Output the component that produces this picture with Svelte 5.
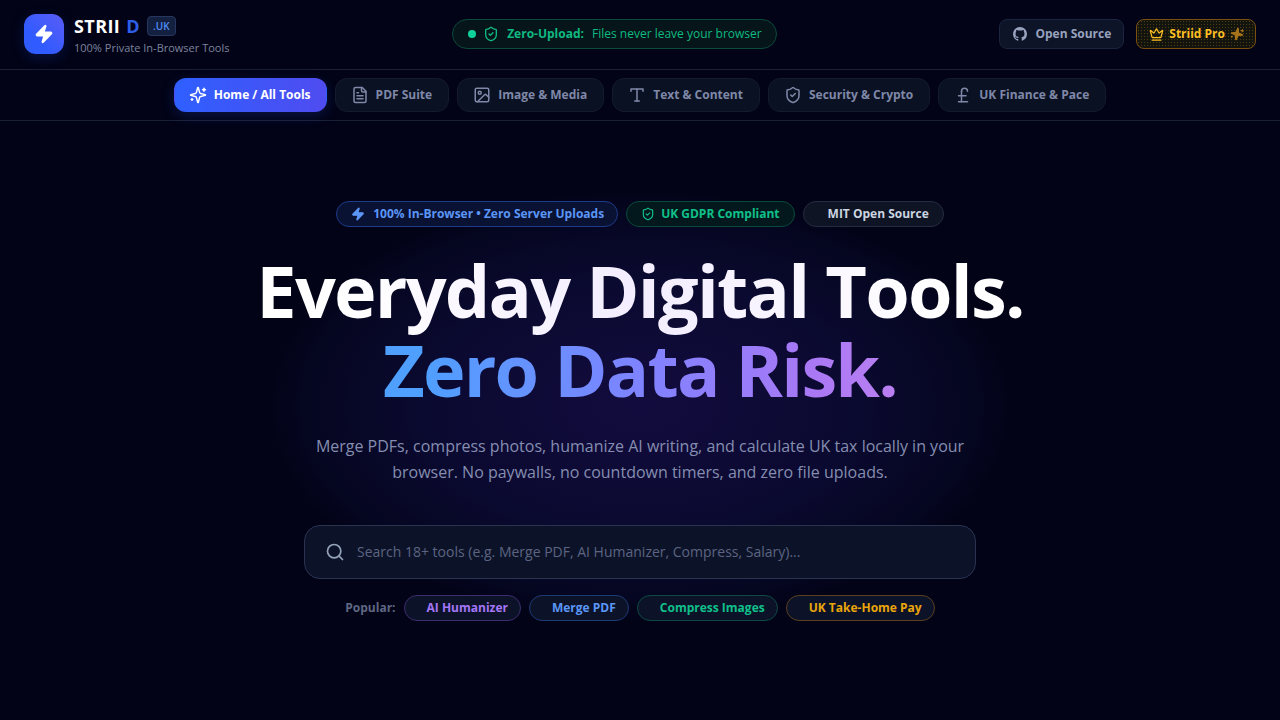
<script lang="ts">
	const icons: Record<string, string[]> = {
		zap: ['M4 14a1 1 0 0 1-.78-1.63l9.9-10.2a.5.5 0 0 1 .86.46l-1.92 6.02A1 1 0 0 0 13 10h7a1 1 0 0 1 .78 1.63l-9.9 10.2a.5.5 0 0 1-.86-.46l1.92-6.02A1 1 0 0 0 11 14z'],
		shield: [
			'M20 13c0 5-3.5 7.5-7.66 8.95a1 1 0 0 1-.67-.01C7.5 20.5 4 18 4 13V6a1 1 0 0 1 1-1c2 0 4.5-1.2 6.24-2.72a1.17 1.17 0 0 1 1.52 0C14.51 3.81 17 5 19 5a1 1 0 0 1 1 1z',
			'm9 12 2 2 4-4'
		],
		crown: [
			'M11.562 3.266a.5.5 0 0 1 .876 0L15.39 8.87a1 1 0 0 0 1.516.294L21.183 5.5a.5.5 0 0 1 .798.519l-2.834 10.246a1 1 0 0 1-.956.734H5.81a1 1 0 0 1-.957-.734L2.02 6.02a.5.5 0 0 1 .798-.519l4.276 3.664a1 1 0 0 0 1.516-.294z',
			'M5 21h14'
		],
		sparkles: [
			'M9.937 15.5A2 2 0 0 0 8.5 14.063l-6.135-1.582a.5.5 0 0 1 0-.962L8.5 9.936A2 2 0 0 0 9.937 8.5l1.582-6.135a.5.5 0 0 1 .963 0L14.063 8.5A2 2 0 0 0 15.5 9.937l6.135 1.581a.5.5 0 0 1 0 .964L15.5 14.063a2 2 0 0 0-1.437 1.437l-1.582 6.135a.5.5 0 0 1-.963 0z',
			'M20 3v4',
			'M22 5h-4',
			'M4 17v2',
			'M5 18H3'
		],
		file: [
			'M15 2H6a2 2 0 0 0-2 2v16a2 2 0 0 0 2 2h12a2 2 0 0 0 2-2V7Z',
			'M14 2v4a2 2 0 0 0 2 2h4',
			'M10 9H8',
			'M16 13H8',
			'M16 17H8'
		],
		image: [
			'M5 3h14a2 2 0 0 1 2 2v14a2 2 0 0 1-2 2H5a2 2 0 0 1-2-2V5a2 2 0 0 1 2-2z',
			'M9 7a2 2 0 1 0 0 4 2 2 0 0 0 0-4z',
			'm21 15-3.086-3.086a2 2 0 0 0-2.828 0L6 21'
		],
		type: ['M4 7V4h16v3', 'M9 20h6', 'M12 4v16'],
		pound: ['M18 7c0-5.333-8-5.333-8 0', 'M10 7v14', 'M6 21h12', 'M6 13h10'],
		search: ['M11 3a8 8 0 1 0 0 16 8 8 0 0 0 0-16z', 'm21 21-4.3-4.3']
	};

	const navItems = [
		{ label: 'Home / All Tools', icon: 'sparkles', active: true },
		{ label: 'PDF Suite', icon: 'file' },
		{ label: 'Image & Media', icon: 'image' },
		{ label: 'Text & Content', icon: 'type' },
		{ label: 'Security & Crypto', icon: 'shield' },
		{ label: 'UK Finance & Pace', icon: 'pound' }
	];

	const popular = [
		{ label: 'AI Humanizer', tone: 'purple' },
		{ label: 'Merge PDF', tone: 'blue' },
		{ label: 'Compress Images', tone: 'green' },
		{ label: 'UK Take-Home Pay', tone: 'amber' }
	];
</script>

{#snippet icon(name: string, size: number, filled = false)}
	<svg
		class="icon"
		width={size}
		height={size}
		viewBox="0 0 24 24"
		fill={filled ? 'currentColor' : 'none'}
		stroke="currentColor"
		stroke-width="2"
		stroke-linecap="round"
		stroke-linejoin="round"
	>
		{#each icons[name] as d}
			<path {d} />
		{/each}
	</svg>
{/snippet}

<div class="page">
	<header class="topbar">
		<div class="brand">
			<div class="logo">{@render icon('zap', 20, true)}</div>
			<div class="brand-text">
				<div class="brand-row">
					<span class="wordmark">STRII <em>D</em></span>
					<span class="tld">.UK</span>
				</div>
				<div class="tagline">100% Private In-Browser Tools</div>
			</div>
		</div>

		<div class="status">
			<span class="dot"></span>
			{@render icon('shield', 16)}
			<strong>Zero-Upload:</strong>
			<span>Files never leave your browser</span>
		</div>

		<div class="actions">
			<button type="button" class="btn-source">
				<svg class="icon" width="14" height="14" viewBox="0 0 16 16" fill="currentColor">
					<path d="M8 0C3.58 0 0 3.58 0 8c0 3.54 2.29 6.53 5.47 7.59.4.07.55-.17.55-.38 0-.19-.01-.82-.01-1.49-2.01.37-2.53-.49-2.69-.94-.09-.23-.48-.94-.82-1.13-.28-.15-.68-.52-.01-.53.63-.01 1.08.58 1.23.82.72 1.21 1.87.87 2.33.66.07-.52.28-.87.51-1.07-1.78-.2-3.64-.89-3.64-3.95 0-.87.31-1.59.82-2.15-.08-.2-.36-1.02.08-2.12 0 0 .67-.21 2.2.82.64-.18 1.32-.27 2-.27.68 0 1.36.09 2 .27 1.53-1.04 2.2-.82 2.2-.82.44 1.1.16 1.92.08 2.12.51.56.82 1.27.82 2.15 0 3.07-1.87 3.75-3.65 3.95.29.25.54.73.54 1.48 0 1.07-.01 1.93-.01 2.2 0 .21.15.46.55.38A8.013 8.013 0 0016 8c0-4.42-3.58-8-8-8z" />
				</svg>
				Open Source
			</button>
			<button type="button" class="btn-pro">
				{@render icon('crown', 15)} Striid Pro
				<span class="pro-spark">{@render icon('sparkles', 14, true)}</span>
			</button>
		</div>
	</header>

	<nav class="tabs">
		{#each navItems as item}
			<button type="button" class="tab" class:active={item.active}>
				{@render icon(item.icon, 18)}
				{item.label}
			</button>
		{/each}
	</nav>

	<main class="hero">
		<div class="glow"></div>
		<div class="badges">
			<span class="badge blue">{@render icon('zap', 14, true)} 100% In-Browser • Zero Server Uploads</span>
			<span class="badge green">{@render icon('shield', 14)} UK GDPR Compliant</span>
			<span class="badge grey">MIT Open Source</span>
		</div>

		<h1>
			<span class="line-one">Everyday Digital Tools.</span>
			<span class="line-two">Zero Data Risk.</span>
		</h1>

		<p class="lead">
			Merge PDFs, compress photos, humanize AI writing, and calculate UK tax locally in your browser. No
			paywalls, no countdown timers, and zero file uploads.
		</p>

		<div class="search">
			{@render icon('search', 20)}
			<input type="text" placeholder="Search 18+ tools (e.g. Merge PDF, AI Humanizer, Compress, Salary)..." />
		</div>

		<div class="popular">
			<span class="popular-label">Popular:</span>
			{#each popular as chip}
				<button type="button" class="chip {chip.tone}">{chip.label}</button>
			{/each}
		</div>
	</main>
</div>

<style>
	:global(body) {
		background: #020316;
	}

	.page {
		height: 720px;
		overflow: hidden;
		background: #020316;
		font-family: 'Open Sans', 'Liberation Sans', sans-serif;
		color: #f8fafc;
	}

	button {
		font-family: inherit;
	}

	.icon {
		flex: none;
		display: block;
	}

	.topbar {
		height: 68px;
		padding: 0 24px 1px;
		border-bottom: 1px solid #1a2036;
		display: flex;
		align-items: center;
		justify-content: space-between;
	}

	.brand {
		display: flex;
		align-items: center;
		gap: 10px;
	}

	.logo {
		width: 40px;
		height: 40px;
		border-radius: 12px;
		background: linear-gradient(45deg, #2f5bff 30%, #5b5cf6 100%);
		box-shadow: 0 4px 14px rgba(47, 91, 255, 0.18);
		color: #fff;
		display: flex;
		align-items: center;
		justify-content: center;
	}

	.brand-row {
		display: flex;
		align-items: center;
		gap: 7px;
		height: 26px;
		margin-top: 1px;
	}

	.wordmark {
		font-size: 18px;
		font-weight: 700;
		line-height: 24px;
		letter-spacing: 0.4px;
		color: #fff;
	}

	.wordmark em {
		font-style: normal;
		margin-left: 1px;
		color: #2f5fe8;
		letter-spacing: 0;
	}

	.tld {
		height: 20px;
		box-sizing: border-box;
		padding: 0 5.5px;
		border: 1px solid #27365f;
		border-radius: 4px;
		background: #14203f;
		color: #4f8ef7;
		font-size: 10px;
		font-weight: 600;
		line-height: 18px;
	}

	.tagline {
		margin-top: 1px;
		font-size: 11px;
		line-height: 16px;
		color: #7c849e;
	}

	.status {
		height: 30px;
		box-sizing: border-box;
		display: flex;
		align-items: center;
		gap: 8px;
		padding: 0 14px;
		border: 1px solid #0a4a3b;
		border-radius: 15px;
		background: #06151a;
		color: #10b981;
		font-size: 12px;
		line-height: 16px;
	}

	.status strong {
		font-weight: 700;
	}

	.dot {
		width: 8px;
		height: 8px;
		margin-left: 0.5px;
		margin-right: -0.5px;
		border-radius: 50%;
		background: #10d39a;
	}

	.actions {
		display: flex;
		gap: 12px;
	}

	.btn-source,
	.btn-pro {
		height: 30px;
		box-sizing: border-box;
		display: flex;
		align-items: center;
		border-radius: 8px;
		font-size: 12px;
		font-weight: 700;
		line-height: 16px;
	}

	.btn-source {
		gap: 8px;
		padding: 0 12px 0 13px;
		background: #0d1427;
		border: 1px solid #1c2540;
		color: #98a2bd;
	}

	.btn-pro {
		gap: 5px;
		padding: 0 11px 0 12px;
		background: radial-gradient(circle, #4d3d12 0.6px, transparent 0.8px) 0 0 / 3px 3px, #14140f;
		border: 1px solid #7a4f10;
		color: #fbbf24;
	}

	.pro-spark {
		color: #a8741a;
		transform: rotate(10deg);
	}

	.tabs {
		height: 50px;
		border-bottom: 1px solid #1a2036;
		display: flex;
		align-items: center;
		justify-content: center;
		gap: 8px;
	}

	.tab {
		height: 34px;
		box-sizing: border-box;
		display: flex;
		align-items: center;
		gap: 7px;
		padding: 0 16px 0 15px;
		border-radius: 12px;
		border: 1px solid #141b2e;
		background: #0a1122;
		color: #7f88a8;
		font-size: 12px;
		font-weight: 700;
		line-height: 16px;
	}

	.tab.active {
		padding: 0 15px 0 14px;
		border-color: transparent;
		background: linear-gradient(90deg, #2f5fff, #4f4cf0);
		color: #fff;
		box-shadow: 0 4px 14px rgba(47, 91, 255, 0.2);
	}

	.hero {
		position: relative;
		display: flex;
		flex-direction: column;
		align-items: center;
		padding-top: 80px;
	}

	.glow {
		position: absolute;
		left: 270px;
		top: 70px;
		width: 740px;
		height: 430px;
		border-radius: 50%;
		background: radial-gradient(closest-side, rgba(72, 40, 190, 0.24), rgba(50, 40, 170, 0.17) 60%, rgba(40, 40, 150, 0.09) 88%, rgba(40, 40, 150, 0.03) 98%, transparent);
		pointer-events: none;
	}

	.badges {
		position: relative;
		display: flex;
		gap: 8px;
	}

	.badge {
		height: 26px;
		box-sizing: border-box;
		display: flex;
		align-items: center;
		gap: 8px;
		padding: 0 14px;
		border-radius: 13px;
		border: 1px solid;
		font-size: 12px;
		font-weight: 700;
		line-height: 16px;
	}

	.badge.blue {
		padding-right: 13px;
		color: #5b96f7;
		background: #0a1233;
		border-color: #1e3a8a;
	}

	.badge.green {
		gap: 6px;
		color: #10c08a;
		background: #03181c;
		border-color: #0a4a3b;
	}

	.badge.grey {
		color: #cbd5e1;
		background: #0f1424;
		border-color: #252b40;
		padding-left: 24px;
	}

	h1 {
		position: relative;
		margin: 24px 0 0;
		font-size: 72px;
		font-weight: 700;
		line-height: 79px;
		letter-spacing: -1.8px;
		text-align: center;
	}

	h1 span {
		display: block;
		padding-bottom: 7px;
		margin-bottom: -7px;
		background-clip: text;
		-webkit-background-clip: text;
		color: transparent;
	}

	.line-one {
		background-image: linear-gradient(90deg, #fff 10%, #f3edff 50%, #fff 90%);
	}

	.line-two {
		background-image: linear-gradient(90deg, #4f9fff 22%, #7f83ff 50%, #a878f5 72%, #bd80f0 85%);
	}

	.lead {
		position: relative;
		width: 672px;
		margin: 24px 0 0;
		font-size: 16px;
		line-height: 26px;
		text-align: center;
		color: #858eb0;
	}

	.search {
		position: relative;
		width: 672px;
		height: 54px;
		box-sizing: border-box;
		margin-top: 40px;
		display: flex;
		align-items: center;
		gap: 12px;
		padding: 0 20px;
		border: 1px solid #2a3350;
		border-radius: 16px;
		background: #0c1328;
		color: #94a3b8;
	}

	.search input {
		flex: 1;
		background: none;
		border: none;
		outline: none;
		padding: 0 0 2px;
		font-family: inherit;
		font-size: 14px;
		color: #f8fafc;
	}

	.search input::placeholder {
		color: #5c6482;
		opacity: 1;
	}

	.popular {
		position: relative;
		display: flex;
		align-items: center;
		gap: 8px;
		margin-top: 16px;
	}

	.popular-label {
		font-size: 12px;
		font-weight: 700;
		line-height: 16px;
		color: #5f6784;
	}

	.chip {
		height: 26px;
		box-sizing: border-box;
		padding: 0 12px 1px 22px;
		border-radius: 13px;
		border: 1px solid;
		background: #0c1328;
		font-size: 12px;
		font-weight: 700;
		line-height: 16px;
	}

	.chip.purple {
		color: #a576f7;
		border-color: #3d2c70;
	}

	.chip.blue {
		color: #5b96f7;
		border-color: #1e3a75;
	}

	.chip.green {
		color: #10c08a;
		border-color: #0d4a44;
	}

	.chip.amber {
		color: #eaa50c;
		border-color: #5a4020;
	}
</style>
